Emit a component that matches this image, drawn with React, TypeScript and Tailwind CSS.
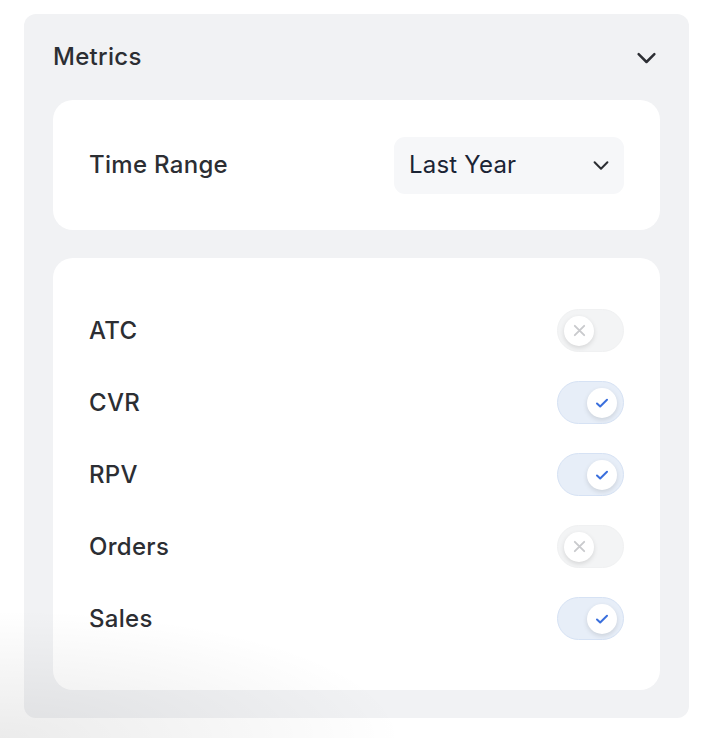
import React, { useState } from 'react';

type Metric = { name: string; on: boolean };

const initial: Metric[] = [
  { name: 'ATC', on: false },
  { name: 'CVR', on: true },
  { name: 'RPV', on: true },
  { name: 'Orders', on: false },
  { name: 'Sales', on: true },
];

function Chevron({ className }: { className?: string }) {
  return (
    <svg viewBox="0 0 24 24" fill="none" stroke="currentColor" strokeWidth={2.2} strokeLinecap="round" strokeLinejoin="round" className={className}>
      <path d="M5 9l7 7 7-7" />
    </svg>
  );
}

function Toggle({ on, onClick }: { on: boolean; onClick: () => void }) {
  return (
    <button
      onClick={onClick}
      className={`relative flex items-center w-[67px] h-[43px] rounded-full border px-[6px] ${
        on ? 'bg-[#e7eef8] border-[#d6e2f4] justify-end' : 'bg-[#f3f4f5] border-[#f0f1f2] justify-start'
      }`}
    >
      <span className="flex items-center justify-center w-[30px] h-[30px] rounded-full bg-white shadow-[0_2px_5px_rgba(0,0,0,0.12)]">
        {on ? (
          <svg viewBox="0 0 16 16" className="w-[16px] h-[16px]" fill="none" stroke="#3a6fdd" strokeWidth={2} strokeLinecap="round" strokeLinejoin="round">
            <path d="M3 8.5l3.2 3L13 4.8" />
          </svg>
        ) : (
          <svg viewBox="0 0 16 16" className="w-[15px] h-[15px]" fill="none" stroke="#c9cacd" strokeWidth={2} strokeLinecap="round">
            <path d="M3 3l10 10M13 3L3 13" />
          </svg>
        )}
      </span>
    </button>
  );
}

export default function App() {
  const [metrics, setMetrics] = useState(initial);

  return (
    <div className="relative w-[722px] h-[738px] bg-white overflow-hidden font-['Inter',sans-serif] text-[#2c2e33]">
      <div className="absolute left-[24px] top-[14px] w-[665px] h-[704px] rounded-[12px] bg-[#f1f2f4] px-[29px] pt-[29px]">
        {/* header */}
        <div className="flex items-center justify-between h-[28px]">
          <h2 className="text-[24px] font-medium tracking-[0.3px]">Metrics</h2>
          <Chevron className="w-[27px] h-[27px] text-[#2c2e33]" />
        </div>

        {/* time range */}
        <div className="mt-[29px] h-[130px] rounded-[20px] bg-white flex items-center justify-between pl-[36px] pr-[36px]">
          <span className="text-[24px] font-medium tracking-[0.3px]">Time Range</span>
          <div className="flex items-center justify-between w-[230px] h-[57px] rounded-[11px] bg-[#f6f7f9] pl-[15px] pr-[12px]">
            <span className="text-[24px] text-[#1b2435] tracking-[0.2px]">Last Year</span>
            <Chevron className="w-[22px] h-[22px] text-[#2c2e33]" />
          </div>
        </div>

        {/* metrics list */}
        <div className="mt-[28px] h-[432px] rounded-[20px] bg-white pl-[36px] pr-[36px] pt-[51px] flex flex-col gap-[29px]">
          {metrics.map((m, i) => (
            <div key={m.name} className="flex items-center justify-between h-[43px]">
              <span className="text-[24px] font-medium tracking-[0.3px]">{m.name}</span>
              <Toggle
                on={m.on}
                onClick={() =>
                  setMetrics((prev) => prev.map((x, j) => (j === i ? { ...x, on: !x.on } : x)))
                }
              />
            </div>
          ))}
        </div>
      </div>

      {/* soft shadow in the bottom-left corner */}
      <div className="pointer-events-none absolute left-0 bottom-0 w-[440px] h-[140px] bg-[radial-gradient(ellipse_at_bottom_left,rgba(0,0,0,0.08),rgba(0,0,0,0)_65%)]" />
    </div>
  );
}
